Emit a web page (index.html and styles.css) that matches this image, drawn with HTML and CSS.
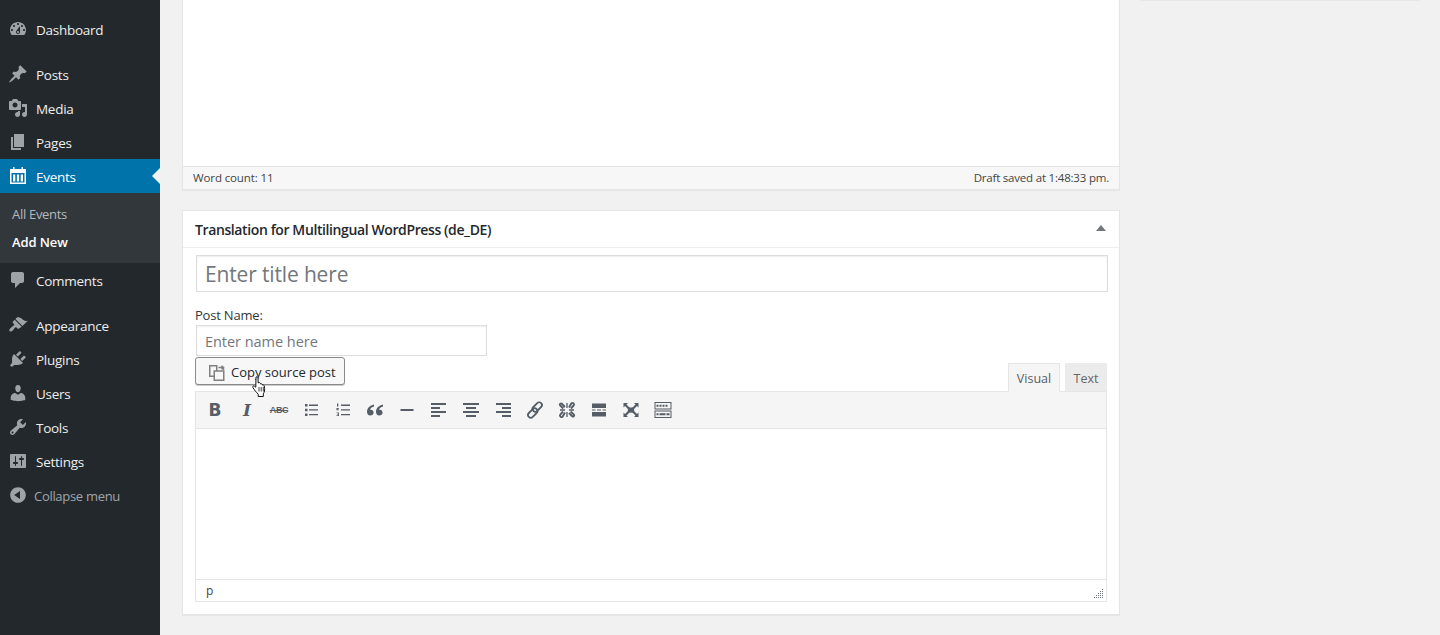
FILE: index.html
```html
<!DOCTYPE html>
<html lang="en">
<head>
<meta charset="utf-8">
<title>Add New Event</title>
<link rel="stylesheet" href="styles.css">
</head>
<body>
<nav class="nav">
  <ul class="menu">
    <li class="item"><svg class="mi" viewBox="0 0 20 20"><path fill-rule="evenodd" d="M3.76 16h12.48c1.1-1.37 1.76-3.11 1.76-5 0-4.42-3.58-8-8-8s-8 3.58-8 8c0 1.89.66 3.63 1.76 5zM10 4c.55 0 1 .45 1 1s-.45 1-1 1-1-.45-1-1 .45-1 1-1zM6 6c.55 0 1 .45 1 1s-.45 1-1 1-1-.45-1-1 .45-1 1-1zm8 0c.55 0 1 .45 1 1s-.45 1-1 1-1-.45-1-1 .45-1 1-1zm-5.37 5.55L12 7v6c0 1.1-.9 2-2 2s-2-.9-2-2c0-.57.24-1.08.63-1.45zM4 10c.55 0 1 .45 1 1s-.45 1-1 1-1-.45-1-1 .45-1 1-1zm12 0c.55 0 1 .45 1 1s-.45 1-1 1-1-.45-1-1 .45-1 1-1zm-5 3c0-.55-.45-1-1-1s-1 .45-1 1 .45 1 1 1 1-.45 1-1z"/></svg>Dashboard</li>
    <li class="sep"></li>
    <li class="item"><svg class="mi" viewBox="0 0 20 20"><path d="M10.44 3.02l1.82-1.82 6.36 6.35-1.83 1.82c-1.05-.68-2.48-.57-3.41.36l-.75.75c-.92.93-1.04 2.35-.35 3.41l-1.83 1.82-2.41-2.41-2.8 2.79c-.42.42-3.38 2.71-3.8 2.29s1.86-3.39 2.28-3.81l2.79-2.79L4.1 9.36l1.83-1.82c1.05.69 2.48.57 3.4-.36l.75-.75c.93-.92 1.05-2.35.36-3.41z"/></svg>Posts</li>
    <li class="item"><svg class="mi" viewBox="0 0 20 20"><path fill-rule="evenodd" d="M13 11V4c0-.55-.45-1-1-1h-1.67L9 1H5L3.67 3H2c-.55 0-1 .45-1 1v7c0 .55.45 1 1 1h10c.55 0 1-.45 1-1zM7 4.5c1.38 0 2.5 1.12 2.5 2.5S8.38 9.5 7 9.5 4.5 8.38 4.5 7 5.62 4.5 7 4.5zM14 6h5v10.5c0 1.38-1.12 2.5-2.5 2.5S14 17.88 14 16.5s1.12-2.5 2.5-2.5c.17 0 .34.02.5.05V9h-3V6zm-4 8.05V13h2v3.5c0 1.38-1.12 2.5-2.5 2.5S7 17.88 7 16.5 8.12 14 9.5 14c.17 0 .34.02.5.05z"/></svg>Media</li>
    <li class="item"><svg class="mi" viewBox="0 0 20 20"><path d="M6 15V2h10v13H6zm-1 1h8v2H3V5h2v11z"/></svg>Pages</li>
    <li class="item item-current"><svg class="mi" viewBox="0 0 20 20"><path fill-rule="evenodd" d="M5 1h1.500v2h7V1H15v2h3v15H2V3h3zM3.500 7v9.500h13V7zM5 8.500h2.300v7H5zm3.900 0h2.200v7H8.900zm3.800 0H15v7h-2.300z"/></svg>Events</li>
    <li class="sub">
      <div class="sub-item">All Events</div>
      <div class="sub-item sub-current">Add New</div>
    </li>
    <li class="item"><svg class="mi" viewBox="0 0 20 20"><path d="M5 2h9c1.1 0 2 .9 2 2v7c0 1.1-.9 2-2 2h-2l-5 5v-5H5c-1.1 0-2-.9-2-2V4c0-1.1.9-2 2-2z"/></svg>Comments</li>
    <li class="sep"></li>
    <li class="item"><svg class="mi" viewBox="0 0 20 20"><path d="M14.48 11.06L7.41 3.99l1.5-1.5c.5-.56 2.3-.47 3.51.32 1.21.8 1.43 1.28 2.91 2.1 1.18.64 2.45 1.26 4.45.85zm-.71.71L6.7 4.7 4.93 6.47c-.39.39-.39 1.02 0 1.41l1.06 1.06c.39.39.39 1.03 0 1.42-.6.6-1.43 1.11-2.21 1.69-.35.26-.7.53-1.01.84C1.43 13.71.96 15.12 1.5 15.9c.78 1.19 2.2.7 3.03-.12.31-.31.58-.66.84-1.01.58-.78 1.09-1.61 1.69-2.21.39-.39 1.03-.39 1.42 0l1.06 1.06c.39.39 1.02.39 1.41 0z"/></svg>Appearance</li>
    <li class="item"><svg class="mi" viewBox="0 0 20 20"><path d="M13.11 4.36L9.87 7.6 8 5.73l3.24-3.24c.35-.34 1.05-.2 1.56.32.52.51.66 1.21.31 1.55zm-8 1.77l.91-1.12 9.01 9.01-1.19.84c-.71.71-2.63 1.16-3.82 1.16H6.14L4.9 17.26c-.59.59-1.54.59-2.12 0-.59-.58-.59-1.53 0-2.12l1.24-1.24v-3.88c0-1.13.4-3.19 1.09-3.89zm7.26 3.97l3.24-3.24c.34-.35 1.04-.21 1.55.31.52.51.66 1.21.31 1.55l-3.24 3.25z"/></svg>Plugins</li>
    <li class="item"><svg class="mi" viewBox="0 0 20 20"><path d="M10 9.25c-2.27 0-2.73-3.44-2.73-3.44C7 4.02 7.82 2 9.97 2c2.16 0 2.98 2.02 2.71 3.81 0 0-.41 3.44-2.68 3.44zm0 2.57L12.72 10c2.39 0 4.52 2.33 4.52 4.53v2.49s-3.65 1.13-7.24 1.13c-3.65 0-7.24-1.13-7.24-1.13v-2.49c0-2.25 1.94-4.48 4.47-4.48z"/></svg>Users</li>
    <li class="item"><svg class="mi" viewBox="0 0 20 20"><path fill-rule="evenodd" d="M16.68 9.77c-1.34 1.34-3.3 1.67-4.95.99l-5.41 6.52c-.99.99-2.59.99-3.58 0s-.99-2.59 0-3.57l6.52-5.42c-.68-1.65-.35-3.61.99-4.95 1.28-1.28 3.12-1.62 4.72-1.06l-2.89 2.89 2.82 2.82 2.86-2.87c.53 1.58.18 3.39-1.08 4.65zM3.81 16.21c.4.39 1.04.39 1.43 0 .4-.4.4-1.04 0-1.43-.39-.4-1.03-.4-1.43 0-.39.39-.39 1.03 0 1.43z"/></svg>Tools</li>
    <li class="item"><svg class="mi" viewBox="0 0 20 20"><path fill-rule="evenodd" d="M18 16V4c0-.55-.45-1-1-1H3c-.55 0-1 .45-1 1v12c0 .55.45 1 1 1h14c.55 0 1-.45 1-1zM8 11h1c.55 0 1 .45 1 1s-.45 1-1 1H8v1.5c0 .28-.22.5-.5.5s-.5-.22-.5-.5V13H6c-.55 0-1-.45-1-1s.45-1 1-1h1V5.5c0-.28.22-.5.5-.5s.5.22.5.5V11zm5-2h-1c-.55 0-1-.45-1-1s.45-1 1-1h1V5.5c0-.28.22-.5.5-.5s.5.22.5.5V7h1c.55 0 1 .45 1 1s-.45 1-1 1h-1v5.5c0 .28-.22.5-.5.5s-.5-.22-.5-.5V9z"/></svg>Settings</li>
    <li class="collapse"><svg class="mi" viewBox="0 0 20 20"><path fill-rule="evenodd" d="M10 2.16c4.33 0 7.84 3.51 7.84 7.84s-3.51 7.84-7.84 7.84S2.16 14.33 2.16 10 5.71 2.16 10 2.16zm2 11.72V6.12L6.18 9.97z"/></svg>Collapse menu</li>
  </ul>
</nav>
<div class="content">
  <main class="col-main">
    <section class="box box-editor">
      <div class="editor-blank"></div>
      <div class="editor-status"><span class="st-left">Word count: 11</span><span class="st-right">Draft saved at 1:48:33 pm.</span></div>
    </section>
    <section class="box box-translation">
      <header class="box-head">
        <h2 class="box-title">Translation for Multilingual WordPress (de_DE)</h2>
        <span class="toggle"></span>
      </header>
      <div class="box-body">
        <input class="title-input" type="text" placeholder="Enter title here">
        <label class="name-label" for="pn">Post Name:</label>
        <input id="pn" class="name-input" type="text" placeholder="Enter name here">
        <div class="tools-row">
          <button class="copy-btn" type="button">
            <svg class="copy-ic" viewBox="0 0 16 16"><path d="M4.500 11.250H.75V.75h7v4.500M5.250 6h9.500v9.250h-9.500zM9.500 2.500h5v2.500M12.500.75l2 1.750-2 1.750" fill="none"/></svg>
            Copy source post
          </button>
          <div class="tabs">
            <span class="tab tab-active">Visual</span>
            <span class="tab">Text</span>
          </div>
          <svg class="cursor" viewBox="0 0 16 21"><path d="M4 1c.9-.6 1.900 0 2 1l.2 5 .6-.3c.8-.3 1.500 0 1.600.7l.1.500c.7-.4 1.500-.1 1.700.6l.1.500c.8-.4 1.700 0 1.900.8.5 1.800.6 3.500.3 5.200-.2 1.100-.7 2-1.200 2.800v2.700H6.200v-2.300C4.500 16.500 2.300 14 .8 11.300c-.4-.8.5-1.800 1.500-1.100l1.500 1z" fill="#fff" stroke="#111" stroke-width="1"/><path d="M7 11v4.500M9.200 11v4.500M11.300 11v4.500" stroke="#111" stroke-width=".8" fill="none"/></svg>
        </div>
        <div class="editor">
          <div class="toolbar">
            <span class="tb tb-b">B</span>
            <span class="tb tb-i">I</span>
            <span class="tb tb-abc">ABC</span>
            <span class="tb"><svg class="ti" viewBox="0 0 20 20"><path d="M4 4h2.500v2.500H4zm0 4.700h2.500v2.500H4zm0 4.700h2.500v2.500H4zM8 4.600h9v1.300H8zm0 4.700h9v1.300H8zm0 4.700h9v1.300H8z"/></svg></span>
            <span class="tb"><svg class="ti" viewBox="0 0 20 20"><path d="M4 3.500h1.300v3H4zm-.500 4.500h2.500v.8H4.800v.7h1.200v.8H3.500zm0 4.500h2.500v3.500H3.500v-.8h1.700v-.6H4v-.7h1.200v-.6H3.500zM8 4.600h9v1.300H8zm0 4.700h9v1.300H8zm0 4.700h9v1.300H8z"/></svg></span>
            <span class="tb"><svg class="ti" viewBox="0 0 20 20"><path d="M9 4.500C5 5.500 2 8 2 11.800c0 2.200 1.300 3.700 3.200 3.700S8.600 14.200 8.600 12.500 7.300 9.700 6 9.700c-.4 0-.7 0-1 .2.300-1.500 2-2.900 4-3.400zM18 4.500c-4 1-7 3.500-7 7.300 0 2.200 1.300 3.700 3.200 3.700s3.400-1.300 3.400-3-1.300-2.800-2.600-2.800c-.4 0-.7 0-1 .2.300-1.500 2-2.900 4-3.400z"/></svg></span>
            <span class="tb"><svg class="ti" viewBox="0 0 20 20"><path d="M3.500 9h13v2h-13z"/></svg></span>
            <span class="tb"><svg class="ti" viewBox="0 0 20 20"><path d="M2 3h15v2H2zm0 4h9v2H2zm0 4h15v2H2zm0 4h9v2H2z"/></svg></span>
            <span class="tb"><svg class="ti" viewBox="0 0 20 20"><path d="M2 3h16v2H2zm3 4h10v2H5zm-3 4h16v2H2zm3 4h10v2H5z"/></svg></span>
            <span class="tb"><svg class="ti" viewBox="0 0 20 20"><path d="M3 3h15v2H3zm6 4h9v2H9zm-6 4h15v2H3zm6 4h9v2H9z"/></svg></span>
            <span class="tb"><svg class="ti" viewBox="0 0 20 20"><g fill="none" stroke="#555d66" stroke-width="1.800"><rect x="9.500" y="1.500" width="5.500" height="11" rx="2.750" transform="rotate(45 12.250 7)"/><rect x="5" y="7.500" width="5.500" height="11" rx="2.750" transform="rotate(45 7.750 13)"/></g></svg></span>
            <span class="tb"><svg class="ti" viewBox="0 0 20 20"><path d="M8 7L4.800 3.800c-1.100-1-2.600.4-1.700 1.600L6.300 8.500M12 13l3.200 3.200c1.100 1 2.600-.4 1.700-1.600l-3.200-3.100M12 7.500l2.500-4.300c1.300-1 3.300.8 2.200 2.300L14 8.500M8 12.500l-2.500 4.300c-1.300 1-3.300-.8-2.200-2.300L6 11.500" fill="none" stroke="#555d66" stroke-width="1.900"/><path d="M3 10h5M10 3v5M17 10h-5M10 17v-5" stroke="#555d66" stroke-width="1.300"/></svg></span>
            <span class="tb"><svg class="ti" viewBox="0 0 20 20"><path d="M3 3.500h14v4.500H3zm0 8.500h14v4.500H3zM3 9.400h3.500v1.200H3zm5 0h4v1.200H8zm5.500 0H17v1.200h-3.500z"/></svg></span>
            <span class="tb"><svg class="ti" viewBox="0 0 20 20"><path d="M2.500 3h4.500L5.500 4.500 8 7c1.300.7 2.700.7 4 0l2.500-2.500L13 3h4.500v4.500L16 6l-2.500 2.500c-.6 1-.6 2 0 3L16 14l1.500-1.500V17H13l1.500-1.500-2.500-2.500c-1.300-.7-2.700-.7-4 0l-2.500 2.500L7 17H2.500v-4.500L4 14l2.500-2.500c.6-1 .6-2 0-3L4 6 2.500 7.500z"/></svg></span>
            <span class="tb"><svg class="ti" viewBox="0 0 20 20"><path fill-rule="evenodd" d="M1.500 2h17v7.500h-17zm1 1v5.500h15V3zM1.500 10.500h17V18h-17zm1 1V17h15v-5.500z"/><path d="M3.500 4.700h2v2h-2zm3 0h2v2h-2zm3 0h2v2h-2zm3 0h2v2h-2zM3.500 13.200h2v2h-2zm3 0h6v2h-6zm7 0h3v2h-3z"/></svg></span>
          </div>
          <div class="editor-area"></div>
          <div class="editor-foot">
            <span class="path">p</span>
            <svg class="grip" viewBox="0 0 10 10"><path d="M8 0h1v1H8zM6 2h1v1H6zm2 0h1v1H8zM4 4h1v1H4zm2 0h1v1H6zm2 0h1v1H8zM2 6h1v1H2zm2 0h1v1H4zm2 0h1v1H6zm2 0h1v1H8zM0 8h1v1H0zm2 0h1v1H2zm2 0h1v1H4zm2 0h1v1H6zm2 0h1v1H8z"/></svg>
          </div>
        </div>
      </div>
    </section>
  </main>
  <aside class="col-side"><div class="side-edge"></div></aside>
</div>
</body>
</html>
```
FILE: styles.css
```css
* { box-sizing: border-box; }
html, body { margin: 0; height: 100%; overflow: hidden; }
body {
  display: flex;
  background: #f1f1f1;
  color: #444;
  font-family: "Open Sans", "Liberation Sans", sans-serif;
  font-size: 13px;
}
.nav { width: 160px; flex: none; background: #23282d; height: 635px; padding-top: 12px; }
.menu { list-style: none; margin: 0; padding: 0; }
.item {
  position: relative;
  display: flex;
  align-items: center;
  height: 34px;
  padding: 1px 0 0 36px;
  color: #eee;
  font-size: 13.5px;
  letter-spacing: -.27px;
}
.mi { position: absolute; left: 8px; top: 7px; width: 20px; height: 20px; fill: #9ea3a8; }
.sep { height: 11px; }
.item-current { background: #0073aa; color: #fff; }
.item-current .mi { fill: #fff; }
.item-current::after {
  content: "";
  position: absolute;
  right: 0;
  top: 9px;
  border: 8px solid transparent;
  border-right-color: #f1f1f1;
  border-left-width: 0;
}
.sub { background: #32373c; padding: 7px 0; }
.sub-item { height: 28px; line-height: 28px; padding-left: 12px; font-size: 13px; letter-spacing: -.3px; color: #b4b9be; }
.sub-current { color: #fff; font-weight: 600; letter-spacing: -.1px; }
.collapse {
  position: relative;
  display: flex;
  align-items: center;
  height: 34px;
  padding: 1px 0 0 34px;
  color: #a0a5aa;
  font-size: 13px;
  letter-spacing: -.3px;
}
.content { flex: 1; display: flex; padding-left: 22px; min-width: 0; }
.col-main { width: 938px; flex: none; }
.col-side { width: 280px; margin-left: 20px; flex: none; }
.side-edge { height: 1px; background: #e7e7e7; }
.box { background: #fff; border: 1px solid #e5e5e5; box-shadow: 0 1px 1px rgba(0, 0, 0, .04); }
.box-editor { border-top: 0; margin-bottom: 20px; }
.editor-blank { height: 166px; }
.editor-status {
  display: flex;
  justify-content: space-between;
  height: 23px;
  padding: 0 10px 1px;
  align-items: center;
  background: #f7f7f7;
  border-top: 1px solid #e5e5e5;
  font-size: 11.5px;
  color: #444;
}
.st-left { letter-spacing: -.12px; }
.st-right { letter-spacing: -.2px; }
.box-translation { height: 405px; }
.box-head {
  display: flex;
  justify-content: space-between;
  align-items: center;
  height: 37px;
  padding: 0 13px 0 12px;
  border-bottom: 1px solid #eee;
}
.box-title { margin: 0; font-size: 14px; font-weight: 600; letter-spacing: -.39px; color: #23282d; }
.toggle { width: 0; height: 0; border: 5px solid transparent; border-top: 0; border-bottom: 6px solid #72777c; margin-top: -2px; }
.box-body { padding: 7px 11px 0 12px; }
.title-input {
  display: block;
  width: 912px;
  height: 37px;
  margin-left: 1px;
  padding: 0 8px 0 8px;
  border: 1px solid #ddd;
  box-shadow: inset 0 1px 2px rgba(0, 0, 0, .07);
  font-family: inherit;
  font-size: 21px;
  letter-spacing: -.15px;
  background: #fff;
  outline: 0;
}
.title-input::placeholder, .name-input::placeholder { color: #72777c; opacity: 1; }
.name-label { display: block; margin-top: 14px; height: 19px; line-height: 19px; color: #32373c; font-size: 13px; letter-spacing: -.2px; }
.name-input {
  display: block;
  width: 291px;
  height: 31px;
  margin-left: 1px;
  padding: 2px 8px 0;
  border: 1px solid #ddd;
  box-shadow: inset 0 1px 2px rgba(0, 0, 0, .07);
  font-family: inherit;
  font-size: 14.5px;
  letter-spacing: -.04px;
  background: #fff;
  outline: 0;
}
.tools-row { position: relative; display: flex; justify-content: space-between; align-items: flex-start; height: 36px; padding-top: 1px; }
.copy-btn {
  display: flex;
  align-items: center;
  width: 150px;
  height: 28px;
  padding: 2px 0 0 12px;
  background: #f7f7f7;
  border: 1px solid #8a8a8a;
  border-radius: 3px;
  box-shadow: 0 1px 0 #ccc;
  font-family: inherit;
  font-size: 13px;
  color: #23282d;
  white-space: nowrap;
}
.copy-ic { width: 16px; height: 16px; margin: 2px 6px 0 1px; stroke: #808080; stroke-width: 1.5; }
.tabs { display: flex; gap: 5px; margin-top: 6px; margin-right: 1px; }
.tab {
  height: 29px;
  width: 42px;
  text-align: center;
  line-height: 29px;
  background: #ebebeb;
  border: 1px solid #ebebeb;
  border-bottom: 1px solid #e5e5e5;
  font-size: 12.5px;
  color: #666;
}
.tab-active { width: 52px; background: #f5f5f5; border-color: #e5e5e5; border-bottom-color: #f5f5f5; color: #555d66; }
.cursor { position: absolute; left: 57px; top: 20px; width: 16px; height: 21px; }
.editor { width: 912px; border: 1px solid #e5e5e5; margin-top: -1px; background: #fff; }
.toolbar {
  display: flex;
  height: 37px;
  padding-left: 3px;
  background: #f5f5f5;
  border-bottom: 1px solid #e5e5e5;
}
.tb {
  display: flex;
  width: 32px;
  height: 36px;
  align-items: center;
  justify-content: center;
  color: #555d66;
}
.ti { width: 20px; height: 20px; fill: #555d66; }
.tb-b { font-family: "DejaVu Sans", sans-serif; font-size: 17px; font-weight: 700; }
.tb-i { font-family: "DejaVu Serif", serif; font-size: 17px; font-weight: 700; font-style: italic; }
.tb-abc { font-family: "Liberation Sans", sans-serif; font-size: 9px; font-weight: 700; text-decoration: line-through; letter-spacing: -.3px; }
.editor-area { height: 151px; border-bottom: 1px solid #e5e5e5; }
.editor-foot {
  position: relative;
  height: 21px;
  padding-left: 10px;
  line-height: 22px;
  font-size: 12px;
  color: #444;
}
.grip { position: absolute; right: 2px; bottom: 2px; width: 10px; height: 10px; fill: #72777c; }
```
